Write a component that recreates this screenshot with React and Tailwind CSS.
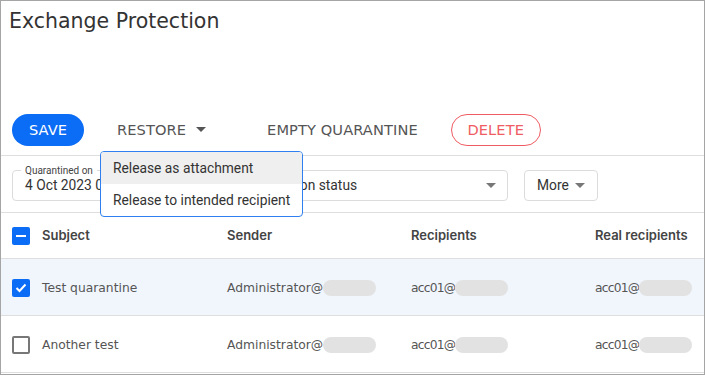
import React from "react";

const mont = "font-['DejaVu_Sans',sans-serif]";
const robo = "font-['Roboto',sans-serif]";

const rows = [
  { subject: "Test quarantine", checked: true },
  { subject: "Another test", checked: false },
];

function Caret({ className = "" }) {
  return (
    <svg width="10" height="5" viewBox="0 0 10 5" className={className}>
      <path d="M0 0h10L5 5z" fill="currentColor" />
    </svg>
  );
}

function Blur() {
  return <span className="inline-block h-[16px] w-[53px] rounded-full bg-[#e2e2e2]" />;
}

function Check({ state }) {
  if (state === "none") {
    return <span className="h-[18px] w-[18px] rounded-[2px] border-2 border-[#777]" />;
  }
  return (
    <span className="flex h-[18px] w-[18px] items-center justify-center rounded-[2px] bg-[#0b6cf6]">
      {state === "all" ? (
        <span className="h-[2px] w-[10px] bg-white" />
      ) : (
        <svg width="12" height="10" viewBox="0 0 12 10">
          <path d="M1.5 5l3 3L10.5 1.5" stroke="#fff" strokeWidth="2" fill="none" />
        </svg>
      )}
    </span>
  );
}

export default function App() {
  return (
    <div className="relative h-[375px] w-[705px] border border-[#a5a5a5] bg-white text-[#444]">
      <div className={`h-[103px] pl-[8px] pt-[6px] text-[20.5px] leading-[28px] text-[#333] ${mont}`}>
        Exchange Protection
      </div>

      <div className={`flex h-[52px] items-center border-b border-[#dedede] pl-[11px] pt-[1px] text-[14.6px] tracking-[0.1px] ${mont}`}>
        <button className="h-[32px] w-[72px] rounded-full bg-[#0b6cf6] text-[14.6px] text-white">SAVE</button>
        <div className="ml-[33px] flex items-center text-[#555]">
          RESTORE
          <Caret className="ml-[10px] text-[#555]" />
        </div>
        <div className="ml-[61px] text-[#555]">EMPTY QUARANTINE</div>
        <button className="ml-[33px] h-[32px] w-[90px] rounded-full border border-[#ef5c63] text-[14.6px] text-[#ef5c63]">
          DELETE
        </button>
      </div>

      <div className={`flex h-[57px] items-center border-b border-[#dedede] pl-[11px] pt-[2px] text-[13.8px] text-[#333] ${robo}`}>
        <div className="relative flex h-[31px] w-[196px] items-center rounded-[4px] border border-[#dcdcdc] pl-[12px] pt-[1px]">
          <span className="absolute -top-[6px] left-[8px] bg-white px-[4px] text-[10px] leading-[12px] text-[#444]">
            Quarantined on
          </span>
          4 Oct 2023 00:00
        </div>
        <div className="ml-[12px] flex h-[31px] w-[288px] items-center justify-between rounded-[4px] border border-[#dcdcdc] pl-[23px] pr-[11px]">
          <span>Notification status</span>
          <Caret className="text-[#777]" />
        </div>
        <div className="ml-[16px] flex h-[31px] w-[74px] items-center justify-between rounded-[4px] border border-[#dcdcdc] pl-[12px] pr-[12px]">
          <span>More</span>
          <Caret className="text-[#777]" />
        </div>
      </div>

      <div className={`text-[12.3px] ${mont}`}>
        <div className="grid h-[46px] grid-cols-[41px_185px_184px_184px_1fr] items-center border-b border-[#dedede] pt-[1px] font-['Inter',sans-serif] text-[13px] font-semibold text-[#444]">
          <div className="flex pl-[11px]">
            <Check state="all" />
          </div>
          <div>Subject</div>
          <div>Sender</div>
          <div>Recipients</div>
          <div>Real recipients</div>
        </div>
        {rows.map((r) => (
          <div
            key={r.subject}
            className={`grid h-[57px] grid-cols-[41px_185px_184px_184px_1fr] items-center border-b border-[#dedede] pt-[2px] text-[#555] ${
              r.checked ? "bg-[#f1f6fd]" : "bg-white"
            }`}
          >
            <div className="flex pl-[11px]">
              <Check state={r.checked ? "on" : "none"} />
            </div>
            <div>{r.subject}</div>
            <div className="flex items-center">
              Administrator@
              <Blur />
            </div>
            <div className="flex items-center">
              <span className="tracking-[-0.8px]">acc01@</span>
              <Blur />
            </div>
            <div className="flex items-center">
              <span className="tracking-[-0.8px]">acc01@</span>
              <Blur />
            </div>
          </div>
        ))}
      </div>

      <div
        className={`absolute left-[99px] top-[150px] w-[203px] overflow-hidden rounded-[4px] border border-[#2f7ff0] bg-white text-[13.8px] text-[#333] ${robo}`}
      >
        <div className="flex h-[32px] items-center bg-[#efefef] pl-[12px]">Release as attachment</div>
        <div className="flex h-[32px] items-center pl-[12px]">Release to intended recipient</div>
      </div>
    </div>
  );
}
